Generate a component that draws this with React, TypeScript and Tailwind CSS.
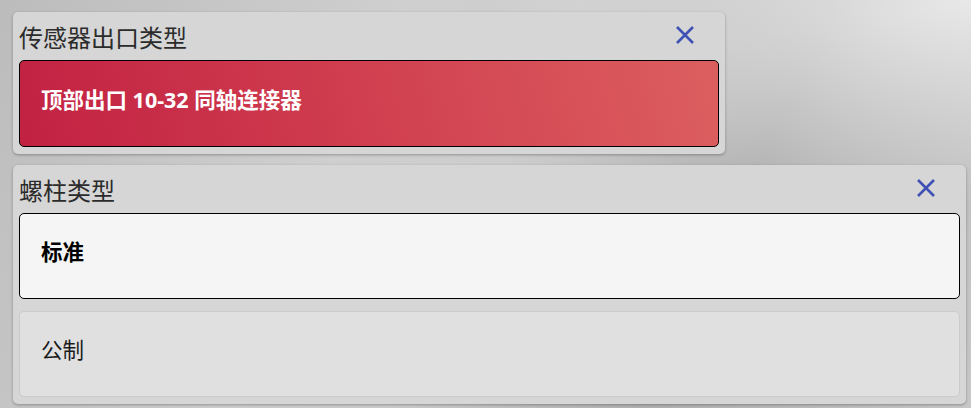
import React from "react";

const font = {
  fontFamily: '"Noto Sans", "Noto Sans CJK SC", sans-serif',
};

function CloseIcon() {
  return (
    <svg width="20" height="20" viewBox="0 0 20 20" className="block">
      <path d="M2 2 L18 18 M18 2 L2 18" stroke="#3f51b5" strokeWidth="2.6" strokeLinecap="butt" fill="none" />
    </svg>
  );
}

function Panel({ title, width, children }: { title: string; width: string; children: React.ReactNode }) {
  return (
    <div className={`${width} rounded-[5px] bg-[#d6d6d6] px-[6px] pb-[7px] shadow-[0_1px_3px_rgba(0,0,0,0.3)]`}>
      <div className="flex h-[48px] items-center justify-between pr-[24px]">
        <span className="mt-[4px] text-[24px] leading-none text-[#2b2b2b]" style={font}>
          {title}
        </span>
        <button className="mb-[2px] flex items-center justify-center">
          <CloseIcon />
        </button>
      </div>
      <div className="flex flex-col gap-[12px]">{children}</div>
    </div>
  );
}

export default function App() {
  return (
    <div
      className="h-[408px] w-[971px] overflow-hidden bg-[radial-gradient(ellipse_at_100%_0%,#e8e8e8_0%,rgba(232,232,232,0)_35%),linear-gradient(115deg,#bcbcbc_0%,#cfcfcf_35%,#cdcdcd_50%,#b2b2b2_72%,#c8c8c8_100%)] pl-[13px] pt-[12px]"
      style={font}
    >
      <div className="flex flex-col gap-[11px]">
        <Panel title="传感器出口类型" width="w-[712px]">
          <button className="flex h-[87px] w-full items-center rounded-[5px] border border-black bg-[linear-gradient(75deg,#c22142_0%,#cf3c4e_45%,#dc5f5f_100%)] pb-[8px] pl-[21px] text-left">
            <span className="text-[21.5px] font-bold leading-none text-white" style={font}>
              顶部出口 10-32 同轴连接器
            </span>
          </button>
        </Panel>
        <Panel title="螺柱类型" width="w-[953px]">
          <button className="flex h-[86px] w-full items-center rounded-[5px] border border-black bg-[#f5f5f5] pb-[8px] pl-[21px] text-left">
            <span className="text-[21.5px] font-bold leading-none text-black" style={font}>
              标准
            </span>
          </button>
          <button className="flex h-[86px] w-full items-center rounded-[5px] border border-[#cbcbcb] bg-[#e0e0e0] pb-[8px] pl-[21px] text-left">
            <span className="text-[21.5px] leading-none text-[#1a1a1a]" style={font}>
              公制
            </span>
          </button>
        </Panel>
      </div>
    </div>
  );
}
